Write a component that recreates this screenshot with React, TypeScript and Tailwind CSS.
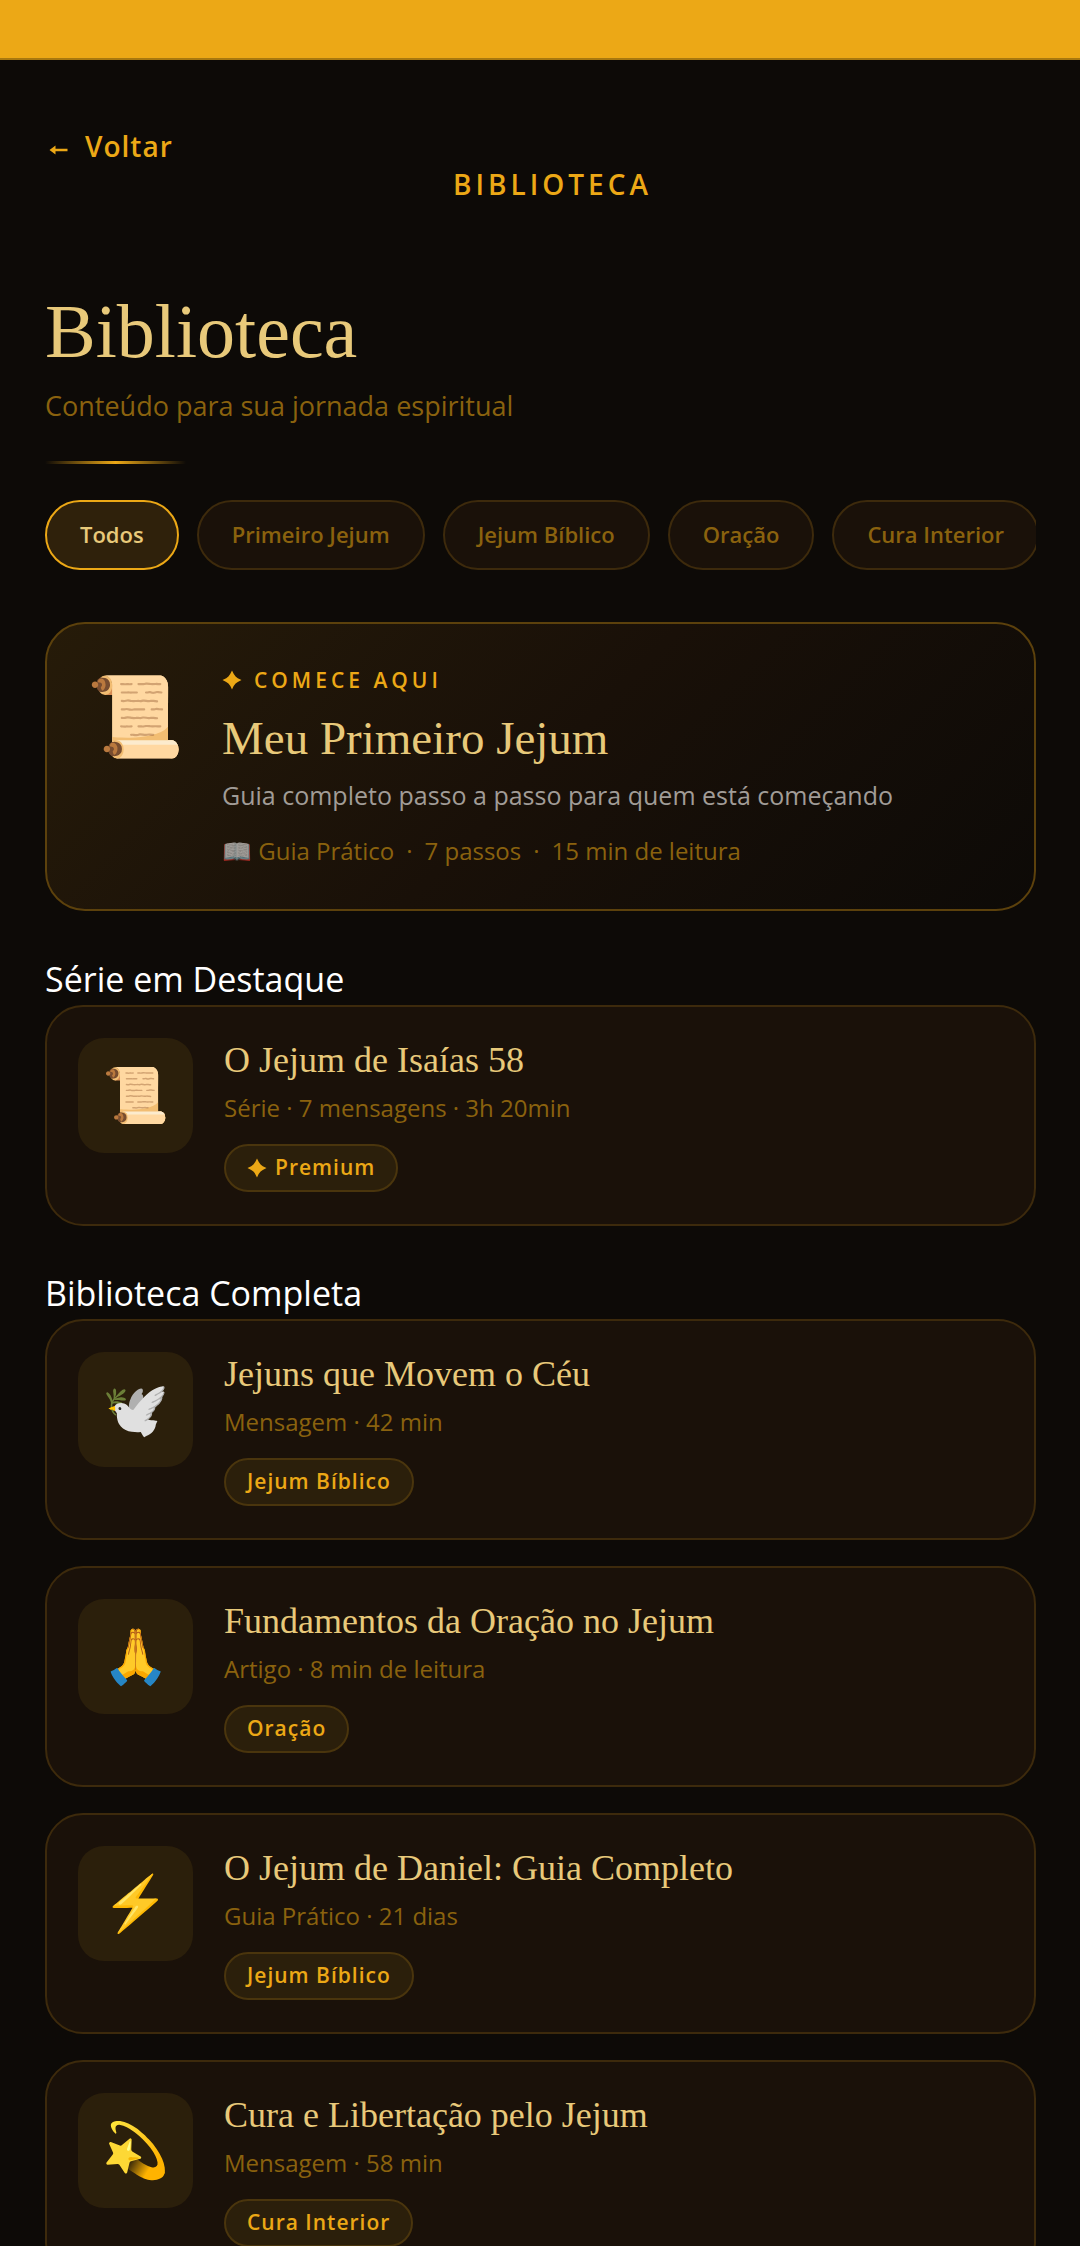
import React from "react";

interface LibraryItem {
  icon: string;
  title: string;
  meta: string;
  tag: string;
  premium?: boolean;
}

const filters = [
  "Todos",
  "Primeiro Jejum",
  "Jejum Bíblico",
  "Oração",
  "Cura Interior",
];

const featured: LibraryItem = {
  icon: "📜",
  title: "O Jejum de Isaías 58",
  meta: "Série · 7 mensagens · 3h 20min",
  tag: "Premium",
  premium: true,
};

const library: LibraryItem[] = [
  {
    icon: "🕊️",
    title: "Jejuns que Movem o Céu",
    meta: "Mensagem · 42 min",
    tag: "Jejum Bíblico",
  },
  {
    icon: "🙏",
    title: "Fundamentos da Oração no Jejum",
    meta: "Artigo · 8 min de leitura",
    tag: "Oração",
  },
  {
    icon: "⚡",
    title: "O Jejum de Daniel: Guia Completo",
    meta: "Guia Prático · 21 dias",
    tag: "Jejum Bíblico",
  },
  {
    icon: "💫",
    title: "Cura e Libertação pelo Jejum",
    meta: "Mensagem · 58 min",
    tag: "Cura Interior",
  },
];

function Sparkle() {
  return (
    <svg viewBox="0 0 20 20" className="size-5 shrink-0" fill="currentColor" aria-hidden="true">
      <path d="M10 0.5Q12 5 13.6 6.4Q15 8 19.5 10Q15 12 13.6 13.6Q12 15 10 19.5Q8 15 6.4 13.6Q5 12 0.5 10Q5 8 6.4 6.4Q8 5 10 0.5Z" />
    </svg>
  );
}

function BackArrow() {
  return (
    <svg viewBox="0 0 24 20" className="mt-2 h-5 w-6 shrink-0" fill="currentColor" aria-hidden="true">
      <path d="M4.5 10L10.5 5.5V8.7H22.5V11.3H10.5V14.5Z" />
    </svg>
  );
}

function LibraryCard({ item }: { item: LibraryItem }) {
  return (
    <article className="flex gap-[31px] rounded-[38px] border-2 border-[#3d2a0c] bg-[#1a1109] px-[31px] pt-[31px] pb-8">
      <div className="flex size-[115px] shrink-0 items-center justify-center rounded-[26px] bg-[#2b1f0b] pb-1.5 text-[54px] leading-none">
        {item.icon}
      </div>
      <div className="min-w-0">
        <h3 className="font-['Liberation_Serif',serif] text-[36px] leading-[44px] text-[#e8c97a]">
          {item.title}
        </h3>
        <p className="mt-2 text-[24px] leading-[36px] text-[#8a620e]">{item.meta}</p>
        <span className="mt-[18px] inline-flex h-12 items-center gap-2 rounded-[24px] border-2 border-[#4a350d] bg-[#2b1f0b] px-[21px] text-[21px] font-semibold tracking-[1px] text-[#eca816]">
          {item.premium && <Sparkle />}
          {item.tag}
        </span>
      </div>
    </article>
  );
}

export default function App() {
  return (
    <div className="min-h-screen bg-[#0d0a07] font-['Open_Sans',sans-serif] text-white">
      <div className="h-[60px] border-b-2 border-[#a8780f] bg-[#eca816]" />

      <main className="pt-[67px] pr-11 pb-10 pl-[45px]">
        <header className="text-[28px] leading-[38px] font-semibold text-[#eca816]">
          <button type="button" className="flex items-center gap-4 tracking-[1px]">
            <BackArrow />
            Voltar
          </button>
          <p className="pl-6 text-center tracking-[4px]">BIBLIOTECA</p>
        </header>

        <h1 className="mt-[82px] font-['Liberation_Serif',serif] text-[76px] leading-[92px] text-[#e8c97a]">
          Biblioteca
        </h1>
        <p className="mt-2.5 text-[27px] leading-[38px] text-[#8a620e]">
          Conteúdo para sua jornada espiritual
        </p>
        <div className="mt-9 h-[3px] w-[141px] bg-linear-to-r from-transparent via-[#eca816] to-transparent" />

        <nav className="mt-9 flex gap-[18px] overflow-hidden">
          {filters.map((filter, i) => (
            <button
              key={filter}
              type="button"
              className={`h-[70px] shrink-0 rounded-full border-2 px-[33px] pb-0.5 text-[22px] font-semibold ${
                i === 0
                  ? "border-[#eca816] bg-[#2f210b] text-[#e8c97a]"
                  : "border-[#3d2a0c] bg-[#1a1109] text-[#8a620e]"
              }`}
            >
              {filter}
            </button>
          ))}
        </nav>

        <article className="mt-[52px] flex gap-[38px] rounded-[40px] border-2 border-[#5c410c] bg-linear-135 from-[#261b09] via-[#191008] to-[#0d0a07] px-[39px] pt-[38px] pb-[41px]">
          <div className="pt-3 text-[79px] leading-none">📜</div>
          <div className="min-w-0">
            <p className="flex items-center gap-3 text-[21px] leading-[36px] font-semibold tracking-[4px] text-[#eca816]">
              <Sparkle />
              COMECE AQUI
            </p>
            <h2 className="mt-2.5 font-['Liberation_Serif',serif] text-[47px] leading-[60px] text-[#e8c97a]">
              Meu Primeiro Jejum
            </h2>
            <p className="mt-2 text-[25px] leading-[38px] text-[#a19c97]">
              Guia completo passo a passo para quem está começando
            </p>
            <p className="mt-5 flex gap-3 text-[24px] leading-[34px] text-[#8a620e]">
              <span>
                <span className="opacity-60">📖</span> Guia Prático
              </span>
              <span>·</span>
              <span>7 passos</span>
              <span>·</span>
              <span>15 min de leitura</span>
            </p>
          </div>
        </article>

        <section className="mt-[42px]">
          <h2 className="text-[34px] leading-[52px]">Série em Destaque</h2>
          <LibraryCard item={featured} />
        </section>

        <section className="mt-[41px]">
          <h2 className="text-[34px] leading-[52px]">Biblioteca Completa</h2>
          <div className="flex flex-col gap-[26px]">
            {library.map((item) => (
              <LibraryCard key={item.title} item={item} />
            ))}
          </div>
        </section>
      </main>
    </div>
  );
}
